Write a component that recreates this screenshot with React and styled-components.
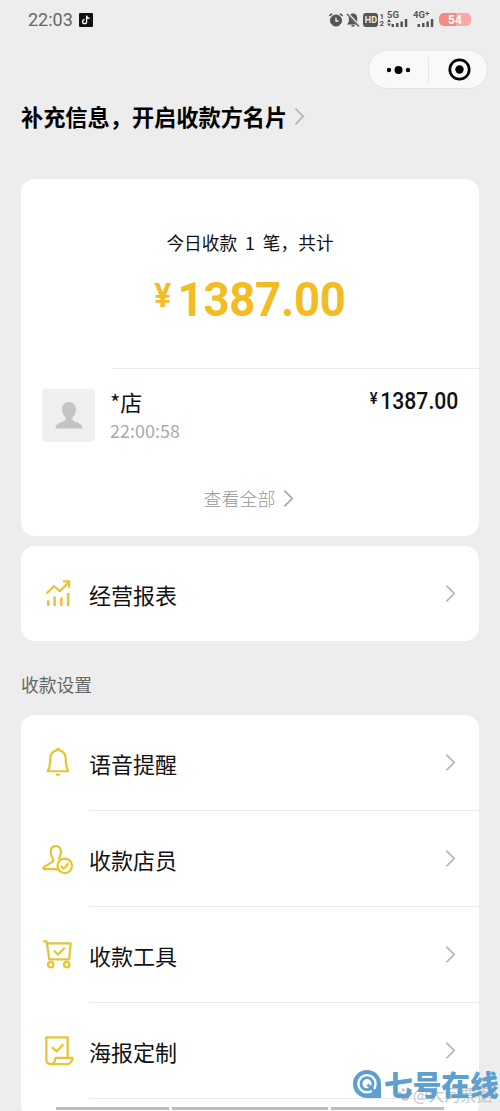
import React from 'react';
import styled, { createGlobalStyle } from 'styled-components';

const REPORTS = [{ label: '经营报表', icon: 'chart' }];

const SETTINGS = [
  { label: '语音提醒', icon: 'bell' },
  { label: '收款店员', icon: 'clerk' },
  { label: '收款工具', icon: 'cart' },
  { label: '海报定制', icon: 'poster' },
];

const icons = {
  chart: (
    <>
      <path d="M4.500 16 12.500 8.500l6 5L28 4M21.500 3.500H28V10" />
      <path d="M6.500 23v6M13 19v10M20 20v9M27 15.500V29" strokeWidth="2.600" />
    </>
  ),
  bell: (
    <>
      <path d="M15 3.500c-4.500 1-6.500 4.500-6.500 8.500 0 5.500-.5 9.500-2.500 13h21c-2-3.500-2.500-7.500-2.500-13 0-4-2-7.500-6.500-8.500a1.500 1.500 0 0 0-3 0Z" />
      <path d="M14.500 28.500h4" />
    </>
  ),
  clerk: (
    <>
      <path d="M16.500 27H2.500c-1 0-1.500-1.300-.7-2L10.500 19.500c1.500-1 1.300-2.500.5-3.800-1.300-2-2-3.700-2-6.200 0-3.800 2-6.300 5.300-6.300s5.200 2.500 5.200 6.300c0 3-2 5-2 7.500" />
      <circle cx="23.500" cy="23.500" r="7.500" />
      <path d="m19.500 23.500 3 3 5-5.500" />
    </>
  ),
  cart: (
    <>
      <path d="M1 2.500h3.800L7.500 21h20.500L29.500 4.500H5.500" />
      <path d="m12.500 12 4 4 7-7" />
      <circle cx="9" cy="26.500" r="2.800" />
      <circle cx="25.500" cy="26.500" r="2.800" />
    </>
  ),
  poster: (
    <>
      <path d="M26.500 22.500V2.500h-22V25c0 3.500 1.500 5 4.500 5H25.500c3.500 0 5.500-2.500 6-6.500H14c-.5 4-2 6.500-5 6.500" />
      <path d="m10.500 12.500 4.500 4.500 7-7.500" />
    </>
  ),
};

const LineIcon = ({ name }) => (
  <IconSvg viewBox="0 0 33 33" aria-hidden="true">{icons[name]}</IconSvg>
);

const Chevron = ({ dark }) => (
  <ChevronSvg $dark={dark} viewBox="0 0 12 20" aria-hidden="true">
    <path d="m1.500 1.500 8.500 8.500-8.500 8.500" />
  </ChevronSvg>
);

const StatusIcons = () => (
  <StatusGroup>
    <svg width="14" height="16" viewBox="0.500 0 14 16" fill="none" stroke="#555">
      <circle cx="7.500" cy="8.500" r="5.600" fill="#555" />
      <path d="m1 4 2.500-2.300M14 4l-2.500-2.300" strokeWidth="1.600" />
      <path d="M7.500 5.500v3.500h2.500" stroke="#eee" strokeWidth="1.300" />
    </svg>
    <svg width="14" height="16" viewBox="0 0 14 16">
      <path d="M7 1.500c-3 0-4.200 2.200-4.200 4.700V10L1 12.500h12L11.200 10V6.200C11.200 3.700 10 1.500 7 1.500ZM5.500 13h3v1.500h-3Z" fill="#555" />
      <path d="m1.500 1.500 12 12.500" stroke="#ededed" strokeWidth="2.600" />
      <path d="m1 2 12 12.500" stroke="#555" strokeWidth="1.300" />
    </svg>
    <Hd><HdBox>HD</HdBox><Sims><span>1</span><span>2</span></Sims></Hd>
    <Signal label="5G" arrows />
    <Signal label="4G" plus />
    <Battery>54</Battery>
  </StatusGroup>
);

const Signal = ({ label, arrows, plus }) => (
  <SignalBox>
    <SignalLabel>{label}{plus && <Plus>+</Plus>}</SignalLabel>
    <svg width="21" height="8" viewBox="0 0 21 8" fill="#555">
      {arrows && <path d="m0 3 2-3 2 3ZM0 4.500l2 3 2-3Z" />}
      <path d="M4.500 5H7v3H4.500ZM9 4h2.500v4H9ZM13.400 2.500h2.500V8h-2.500ZM17.800 0h2.500v8h-2.500Z" />
    </svg>
  </SignalBox>
);

const App = () => (
  <>
    <GlobalStyle />
    <Screen>
      <StatusBar>
        <Clock>22:03</Clock>
        <AppBadge viewBox="0 0 14 14" aria-hidden="true">
          <rect width="14" height="14" rx="1" fill="#111" />
          <path d="M7.600 2.500v6.200a2 2 0 1 1-2-2M7.600 2.800c.4 1.700 1.400 2.400 3 2.500" fill="none" stroke="#fff" strokeWidth="1.300" />
        </AppBadge>
        <StatusIcons />
      </StatusBar>

      <NavBar>
        <Capsule>
          <svg width="26" height="12" viewBox="0 0 26 12">
            <circle cx="3" cy="6" r="2.200" />
            <circle cx="12.500" cy="6" r="4" />
            <circle cx="22" cy="6" r="2.200" />
          </svg>
          <CapsuleLine />
          <svg width="24" height="24" viewBox="0 0 24 24">
            <circle cx="12.500" cy="11.500" r="9.700" fill="none" stroke="#000" strokeWidth="2.700" />
            <circle cx="12.500" cy="11.500" r="4.200" />
          </svg>
        </Capsule>
      </NavBar>

      <Notice>
        补充信息，开启收款方名片
        <Chevron />
      </Notice>

      <Content>
        <SummaryCard>
          <SummaryText>今日收款 1 笔，共计</SummaryText>
          <Total><Yen>¥</Yen>1387.00</Total>
          <Payment>
            <Avatar>
              <svg width="28" height="27" viewBox="0 0 28 27" fill="#c4c4c4">
                <path d="M14 0c-4 0-7 2.800-7 7 0 4 1.800 6.500 3.500 8.500.6 2-.2 3-2 3.800C4 21.200.5 22 .5 26.500h27c0-4.500-3.500-5.300-8-7.200-1.800-.8-2.600-1.800-2-3.800C19.200 13.500 21 11 21 7c0-4.200-3-7-7-7Z" />
              </svg>
            </Avatar>
            <Payer>
              <PayerName>*店</PayerName>
              <PayTime>22:00:58</PayTime>
            </Payer>
            <Amount><SmallYen>¥</SmallYen>1387.00</Amount>
          </Payment>
          <ViewAll>
            查看全部
            <Chevron dark />
          </ViewAll>
        </SummaryCard>

        <Card>
          {REPORTS.map(item => <MenuItem key={item.label} {...item} />)}
        </Card>

        <SectionTitle>收款设置</SectionTitle>

        <Card>
          {SETTINGS.map(item => <MenuItem key={item.label} divided {...item} />)}
          <ListTail />
        </Card>
      </Content>

      <BottomBars><Bar /><Bar /><Bar /></BottomBars>
      <Attribution>
        <PawSvg viewBox="0 0 18 16" aria-hidden="true">
          <ellipse cx="9" cy="11" rx="4.500" ry="3.800" />
          <circle cx="3" cy="6.500" r="1.900" />
          <circle cx="7" cy="3" r="1.900" />
          <circle cx="12" cy="3" r="1.900" />
          <circle cx="15.500" cy="7" r="1.900" />
        </PawSvg>
        @大河票据
      </Attribution>
      <Brand>
        <svg width="29" height="29" viewBox="0 0 29 29">
          <path d="M14 0a14 14 0 1 0 0 28h14V14A14 14 0 0 0 14 0Z" fill="#5ba0d0" />
          <circle cx="14" cy="13.700" r="9.800" fill="#fff" />
          <circle cx="14" cy="13.700" r="6" fill="none" stroke="#5ba0d0" strokeWidth="2.800" />
          <path d="m14.500 14.500 7 7" stroke="#5ba0d0" strokeWidth="2.800" />
        </svg>
        <BrandName>七号在线</BrandName>
      </Brand>
    </Screen>
  </>
);

const MenuItem = ({ label, icon, divided }) => (
  <Row $divided={divided}>
    <LineIcon name={icon} />
    <RowBody $divided={divided}>
      {label}
      <Chevron />
    </RowBody>
  </Row>
);

// Styled Components
const GlobalStyle = createGlobalStyle`
  * {
    box-sizing: border-box;
  }

  body {
    margin: 0;
    background: #ededed;
    font-family: 'Noto Sans CJK SC', sans-serif;
    color: #111;
  }
`;

const Screen = styled.div`
  position: relative;
  width: 500px;
  height: 1111px;
  overflow: hidden;
  background: #ededed;
`;

const StatusBar = styled.header`
  display: flex;
  align-items: center;
  height: 39px;
  padding: 0 29px 0 28px;
`;

const Clock = styled.span`
  width: 51px;
  font-family: Roboto, sans-serif;
  font-size: 18px;
  color: #666;
`;

const AppBadge = styled.svg`
  width: 14px;
  height: 14px;
`;

const StatusGroup = styled.div`
  display: flex;
  align-items: center;
  gap: 3px;
  margin-left: auto;
  font-family: Roboto, sans-serif;
  font-weight: 700;
  color: #555;
`;

const Hd = styled.div`
  display: flex;
  align-items: center;
  gap: 1px;
`;

const HdBox = styled.span`
  width: 15px;
  height: 14px;
  border-radius: 3px;
  background: #555;
  color: #eee;
  font-size: 9px;
  line-height: 14px;
  text-align: center;
`;

const Sims = styled.span`
  display: grid;
  font-size: 8px;
  line-height: 7px;
`;

const SignalBox = styled.div`
  display: flex;
  flex-direction: column;
  width: 23px;
`;

const SignalLabel = styled.span`
  display: flex;
  height: 7px;
  font-size: 9.5px;
  line-height: 6px;
`;

const Plus = styled.span`
  font-size: 8px;
  line-height: 4px;
`;

const Battery = styled.span`
  width: 32px;
  height: 13px;
  border-radius: 5px;
  background: linear-gradient(90deg, #f38a83 52%, #f8aaa4 52%);
  color: #fff;
  font-size: 12px;
  line-height: 14px;
  text-align: center;
`;

const NavBar = styled.div`
  display: flex;
  justify-content: flex-end;
  padding: 11px 12px 0 0;
`;

const Capsule = styled.div`
  display: grid;
  grid-template-columns: 59px 1px 59px;
  align-items: center;
  justify-items: center;
  width: 120px;
  height: 39px;
  border: 1px solid #e5e5e5;
  border-radius: 20px;
  background: #f9f9f9;
`;

const CapsuleLine = styled.span`
  width: 1px;
  height: 25px;
  background: #e6e6e6;
`;

const Notice = styled.div`
  display: flex;
  align-items: center;
  gap: 7px;
  height: 36px;
  margin: 9px 0 1px;
  padding-left: 21px;
  font-size: 22.2px;
  font-weight: 700;
  color: #000;
`;

const ChevronSvg = styled.svg`
  flex: none;
  width: 11px;
  height: 19px;
  fill: none;
  stroke: ${props => props.$dark ? '#a8a8a8' : '#b5b5b5'};
  stroke-width: 1.9;
`;

const Content = styled.main`
  padding: 44px 21px 0;
`;

const Card = styled.section`
  overflow: hidden;
  border-radius: 14px;
  background: #fff;
`;

const SummaryCard = styled(Card)`
  display: flex;
  flex-direction: column;
  height: 357px;
  margin-bottom: 10px;
  padding-top: 50px;
`;

const SummaryText = styled.p`
  margin: 0;
  height: 26px;
  font-size: 17.7px;
  line-height: 26px;
  text-align: center;
  word-spacing: 4px;
`;

const Total = styled.div`
  display: flex;
  justify-content: center;
  height: 56px;
  margin-top: 17px;
  font-family: Roboto, sans-serif;
  font-size: 49px;
  font-weight: 700;
  line-height: 56px;
  letter-spacing: -0.3px;
  color: #f2bd24;
  transform: scaleX(0.93);
`;

const Yen = styled.span`
  margin-right: 7px;
  font-size: 34px;
  line-height: 47px;
`;

const Payment = styled.div`
  display: flex;
  margin-top: 40px;
  padding: 20px 21px 0;
  background: linear-gradient(#ebebeb, #ebebeb) 91px 0 / 100% 1px no-repeat;
`;

const Avatar = styled.div`
  display: grid;
  place-items: center;
  width: 53px;
  height: 53px;
  margin-top: 1px;
  border-radius: 4px;
  background: #efefef;
`;

const Payer = styled.div`
  margin-left: 15px;
`;

const PayerName = styled.div`
  height: 29px;
  font-size: 22px;
  line-height: 27px;
`;

const PayTime = styled.div`
  font-size: 18px;
  line-height: 27px;
  color: #aaa;
`;

const Amount = styled.div`
  display: flex;
  margin-left: auto;
  font-family: Roboto, sans-serif;
  font-size: 23px;
  font-weight: 500;
  line-height: 27px;
  transform: scaleX(0.92);
  transform-origin: right;
`;

const SmallYen = styled.span`
  margin-right: 3px;
  font-size: 16px;
  line-height: 22px;
`;

const ViewAll = styled.div`
  display: flex;
  align-items: center;
  justify-content: center;
  gap: 7px;
  height: 28px;
  margin-top: 40px;
  padding-right: 3px;
  font-size: 18px;
  font-weight: 300;
  color: #969696;
`;

const Row = styled.div`
  display: flex;
  align-items: center;
  height: ${props => props.$divided ? 96 : 95}px;
  padding-left: 21px;
`;

const IconSvg = styled.svg`
  width: 32px;
  height: 32px;
  flex: none;
  fill: none;
  stroke: #e6c535;
  stroke-width: 2.3;
  stroke-linejoin: round;
`;

const RowBody = styled.div`
  display: flex;
  align-items: center;
  justify-content: space-between;
  flex: 1;
  height: 100%;
  margin-left: 15px;
  padding-right: 23px;
  border-bottom: ${props => props.$divided ? '1px solid #ebebeb' : 'none'};
  font-size: 22px;
`;

const SectionTitle = styled.h2`
  margin: 0;
  height: 74px;
  padding-top: 30px;
  font-size: 17.8px;
  font-weight: 400;
  line-height: 26px;
  color: #666;
`;

const ListTail = styled.div`
  height: 20px;
`;

// Overlays pinned to the bottom edge of the screen
const BottomBars = styled.div`
  position: absolute;
  left: 56px;
  bottom: 1px;
  display: flex;
  gap: 3px;
`;

const Bar = styled.span`
  width: 113px;
  height: 3px;
  background: #bcbcbc;

  &:nth-child(2) {
    width: 156px;
  }
`;

const Attribution = styled.div`
  position: absolute;
  left: 397px;
  bottom: 8px;
  display: flex;
  align-items: center;
  font-size: 16px;
  line-height: 18px;
  color: #c6c6c6;
`;

const PawSvg = styled.svg`
  width: 16px;
  height: 15px;
  fill: #c4c4c4;
`;

const Brand = styled.div`
  position: absolute;
  left: 353px;
  bottom: 11px;
  display: flex;
  align-items: center;
  gap: 2px;
`;

const BrandName = styled.span`
  font-size: 28.7px;
  font-weight: 900;
  line-height: 29px;
  padding-bottom: 2px;
  color: #5ba0d0;
`;

export default App;
